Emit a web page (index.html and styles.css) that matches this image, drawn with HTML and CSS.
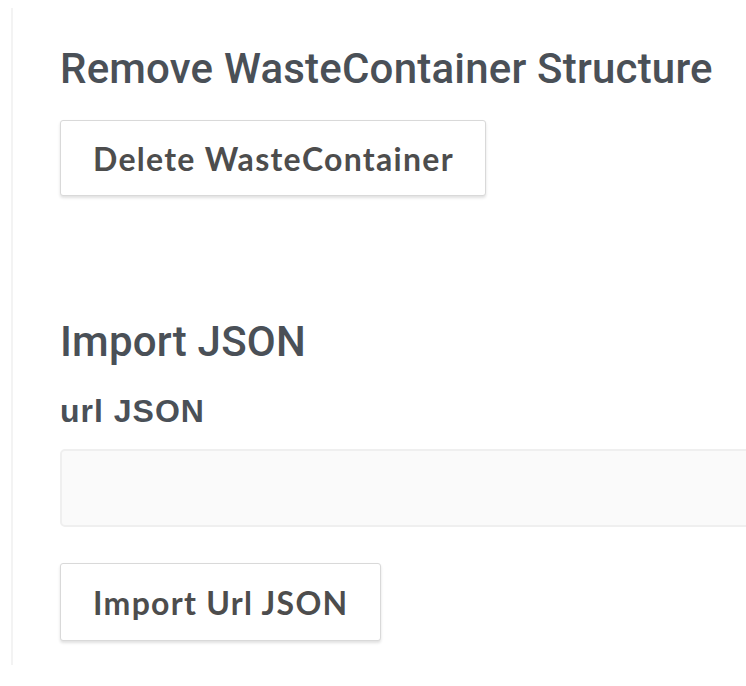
FILE: index.html
```html
<!DOCTYPE html>
<html lang="en">
<head>
<meta charset="utf-8">
<title>WasteContainer tools</title>
<link rel="stylesheet" href="styles.css">
</head>
<body>
<main class="panel">
  <section class="block">
    <h2 class="block-title">Remove WasteContainer Structure</h2>
    <button class="btn" type="button">Delete WasteContainer</button>
  </section>
  <section class="block block-import">
    <h2 class="block-title">Import JSON</h2>
    <label class="field-label" for="url-json">url JSON</label>
    <input class="field-input" id="url-json" type="text">
    <button class="btn btn-import" type="button">Import Url JSON</button>
  </section>
</main>
</body>
</html>
```
FILE: styles.css
```css
html, body {
  margin: 0;
  padding: 0;
  background: #ffffff;
  overflow: hidden;
}

.panel {
  margin: 8px 0 0 11px;
  border-left: 2px solid #f3f3f3;
  padding: 39px 0 0 47px;
  height: 618px;
  box-sizing: content-box;
  display: flex;
  flex-direction: column;
}

.block {
  display: flex;
  flex-direction: column;
  align-items: flex-start;
}

.block-import {
  margin-top: 124px;
}

.block-title {
  margin: 0;
  font-family: Roboto, "Liberation Sans", sans-serif;
  font-weight: 500;
  font-size: 42px;
  line-height: 44px;
  color: #4a5057;
  letter-spacing: 0.2px;
  white-space: nowrap;
}

.btn {
  margin-top: 29px;
  font-family: Lato, "Open Sans", sans-serif;
  font-weight: 700;
  font-size: 32px;
  letter-spacing: 1.3px;
  color: #4d4d4d;
  background: #ffffff;
  border: 1px solid #d9d9d9;
  border-radius: 3px;
  box-shadow: 0 2px 3px rgba(0, 0, 0, 0.12);
  padding: 0 31px 0 32px;
  height: 76px;
  cursor: pointer;
}

.field-label {
  margin-top: 29px;
  font-family: "Liberation Sans", Arial, sans-serif;
  font-weight: 700;
  font-size: 32px;
  line-height: 36px;
  letter-spacing: 1px;
  color: #4a5057;
}

.field-input {
  margin-top: 20px;
  width: 720px;
  height: 78px;
  box-sizing: border-box;
  background: #fafafa;
  border: 2px solid #efefef;
  border-radius: 5px;
}

.btn-import {
  margin-top: 36px;
  height: 78px;
}
```
